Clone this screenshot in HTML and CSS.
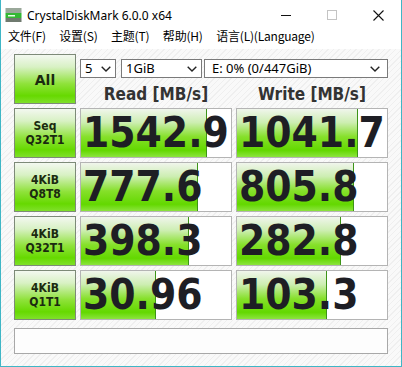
FILE: index.html
```html
<!DOCTYPE html>
<html lang="zh-CN">
<head>
    <meta charset="UTF-8">
    <title>CrystalDiskMark 6.0.0 x64</title>
    <link rel="stylesheet" href="styles.css">
</head>
<body>
    <div class="window">
        <div class="title-bar">
            <svg class="app-icon" width="17" height="16" viewBox="0 0 17 16">
                <rect x="0.5" y="1" width="16" height="5" fill="#9aa89a"/>
                <rect x="0.5" y="6" width="16" height="5" fill="#33b833"/>
                <rect x="3" y="8" width="7" height="1.5" fill="#e8ffe8"/>
                <rect x="0.5" y="11" width="16" height="4" fill="#6f7a6f"/>
            </svg>
            <span class="title">CrystalDiskMark 6.0.0 x64</span>
            <div class="caption-buttons">
                <div class="cap-btn">
                    <svg width="10" height="10" viewBox="0 0 10 10"><path d="M0 5.5H10" stroke="#111" stroke-width="1"/></svg>
                </div>
                <div class="cap-btn">
                    <svg width="10" height="10" viewBox="0 0 10 10"><rect x="0.5" y="0.5" width="9" height="9" fill="none" stroke="#c4c4c4"/></svg>
                </div>
                <div class="cap-btn">
                    <svg width="11" height="11" viewBox="0 0 11 11"><path d="M0.5 0.5L10.5 10.5M10.5 0.5L0.5 10.5" stroke="#111" stroke-width="1.1"/></svg>
                </div>
            </div>
        </div>
        <div class="menu-bar">
            <span>文件(F)</span>
            <span>设置(S)</span>
            <span>主题(T)</span>
            <span>帮助(H)</span>
            <span>语言(L)(Language)</span>
        </div>
        <div class="content">
            <div class="bench">
                <div class="label-btn all-btn">All</div>
                <div class="head">
                    <div class="selects">
                        <div class="select sel-count">5<svg class="chev" width="10" height="6" viewBox="0 0 10 6"><path d="M0.7 0.7L5 5L9.3 0.7" fill="none" stroke="#222" stroke-width="1.4"/></svg></div>
                        <div class="select sel-size">1GiB<svg class="chev" width="10" height="6" viewBox="0 0 10 6"><path d="M0.7 0.7L5 5L9.3 0.7" fill="none" stroke="#222" stroke-width="1.4"/></svg></div>
                        <div class="select sel-drive">E: 0% (0/447GiB)<svg class="chev" width="10" height="6" viewBox="0 0 10 6"><path d="M0.7 0.7L5 5L9.3 0.7" fill="none" stroke="#222" stroke-width="1.4"/></svg></div>
                    </div>
                    <div class="col-titles">
                        <span>Read [MB/s]</span>
                        <span>Write [MB/s]</span>
                    </div>
                </div>

                <div class="label-btn">Seq<br>Q32T1</div>
                <div class="result"><div class="bar" style="width: 83.77%"></div><span class="value">1542.9</span></div>
                <div class="result"><div class="bar" style="width: 80.35%"></div><span class="value">1041.7</span></div>

                <div class="label-btn">4KiB<br>Q8T8</div>
                <div class="result"><div class="bar" style="width: 77.82%"></div><span class="value">777.6</span></div>
                <div class="result"><div class="bar" style="width: 78.12%"></div><span class="value">805.8</span></div>

                <div class="label-btn">4KiB<br>Q32T1</div>
                <div class="result"><div class="bar" style="width: 72.00%"></div><span class="value">398.3</span></div>
                <div class="result"><div class="bar" style="width: 69.03%"></div><span class="value">282.8</span></div>

                <div class="label-btn">4KiB<br>Q1T1</div>
                <div class="result"><div class="bar" style="width: 49.82%"></div><span class="value">30.96</span></div>
                <div class="result"><div class="bar" style="width: 60.28%"></div><span class="value">103.3</span></div>

                <div class="comment"></div>
            </div>
        </div>
    </div>
</body>
</html>
```

FILE: styles.css
```css
* {
    margin: 0;
    padding: 0;
    box-sizing: border-box;
}

body {
    background-color: #fff;
    font-family: 'Noto Sans', sans-serif;
}

.window {
    width: 402px;
    height: 367px;
    border: 1px solid #3fb6c6;
    border-top: none;
    display: flex;
    flex-direction: column;
    overflow: hidden;
}

/* title bar */
.title-bar {
    height: 30px;
    display: flex;
    align-items: center;
    background-color: #fff;
}

.app-icon {
    margin-left: 4px;
    margin-right: 5px;
}

.title {
    font-family: 'Noto Sans', sans-serif;
    font-size: 12px;
    color: #000;
}

.caption-buttons {
    margin-left: auto;
    display: flex;
    height: 30px;
}

.cap-btn {
    width: 46px;
    display: flex;
    align-items: center;
    justify-content: center;
}

/* menu */
.menu-bar {
    height: 19px;
    display: flex;
    gap: 13.5px;
    padding-left: 7px;
    font-family: 'Noto Sans CJK SC', sans-serif;
    font-size: 12px;
    line-height: 12px;
    color: #000;
    background-color: #fff;
}

.menu-bar span {
    letter-spacing: -0.2px;
}

/* main area */
.content {
    flex: 1;
    padding: 5px 13px 0 13px;
    background: repeating-linear-gradient(135deg, #f9f9f9 0px, #f9f9f9 3px, #efefef 3px, #efefef 4px);
}

.bench {
    display: grid;
    grid-template-columns: 62px 152px 152px;
    grid-template-rows: 50px 50px 50px 50px 50px 30px;
    gap: 4px;
}

.label-btn {
    display: flex;
    align-items: center;
    justify-content: center;
    text-align: center;
    border: 1px solid #7d8a78;
    background: linear-gradient(to bottom, #f3f8f0 0%, #d8f1c4 25%, #8fe23a 60%, #66d900 85%, #7fe02a 100%);
    font-family: 'DejaVu Sans Condensed', 'DejaVu Sans', sans-serif;
    font-weight: bold;
    font-size: 12px;
    line-height: 14px;
    color: #1b2a10;
}

.all-btn {
    font-family: 'DejaVu Sans', sans-serif;
    font-size: 14px;
    padding-top: 2px;
}

.head {
    grid-column: 2 / 4;
    display: flex;
    flex-direction: column;
}

.selects {
    display: flex;
    margin-top: 5px;
    height: 19px;
}

.select {
    display: flex;
    align-items: center;
    justify-content: space-between;
    background-color: #fff;
    border: 1px solid #7a7a7a;
    padding: 0 4px 1px 4px;
    font-size: 13px;
    color: #000;
}

.chev {
    margin-top: 1px;
}

.sel-count {
    width: 36px;
}

.sel-size {
    width: 81px;
    margin-left: 5px;
}

.sel-drive {
    width: 184px;
    margin-left: 2px;
    padding-left: 7px;
    padding-right: 7px;
}

.col-titles {
    display: grid;
    grid-template-columns: 152px 152px;
    column-gap: 4px;
    margin-top: 6px;
    font-family: 'DejaVu Sans Condensed', 'DejaVu Sans', sans-serif;
    font-weight: bold;
    font-size: 17px;
    line-height: 20px;
    color: #333;
    text-align: center;
}

.result {
    display: grid;
    border: 1px solid #b4b4b4;
    background-color: #fff;
}

.bar,
.value {
    grid-area: 1 / 1;
}

.bar {
    height: 100%;
    background: linear-gradient(to bottom, #f0f5ec 0%, #cdeeb2 28%, #86e02a 58%, #63d800 86%, #8ce43e 100%);
    border-right: 1px solid #3d9418;
}

.value {
    align-self: center;
    padding-left: 2px;
    font-family: 'DejaVu Sans Condensed', 'DejaVu Sans', sans-serif;
    font-weight: bold;
    font-size: 42px;
    line-height: 1;
    color: #1e1e24;
    white-space: nowrap;
}

.comment {
    grid-column: 1 / 4;
    margin-top: 4px;
    border: 1px solid #a8a8a8;
    background-color: #fdfdfd;
}
```
